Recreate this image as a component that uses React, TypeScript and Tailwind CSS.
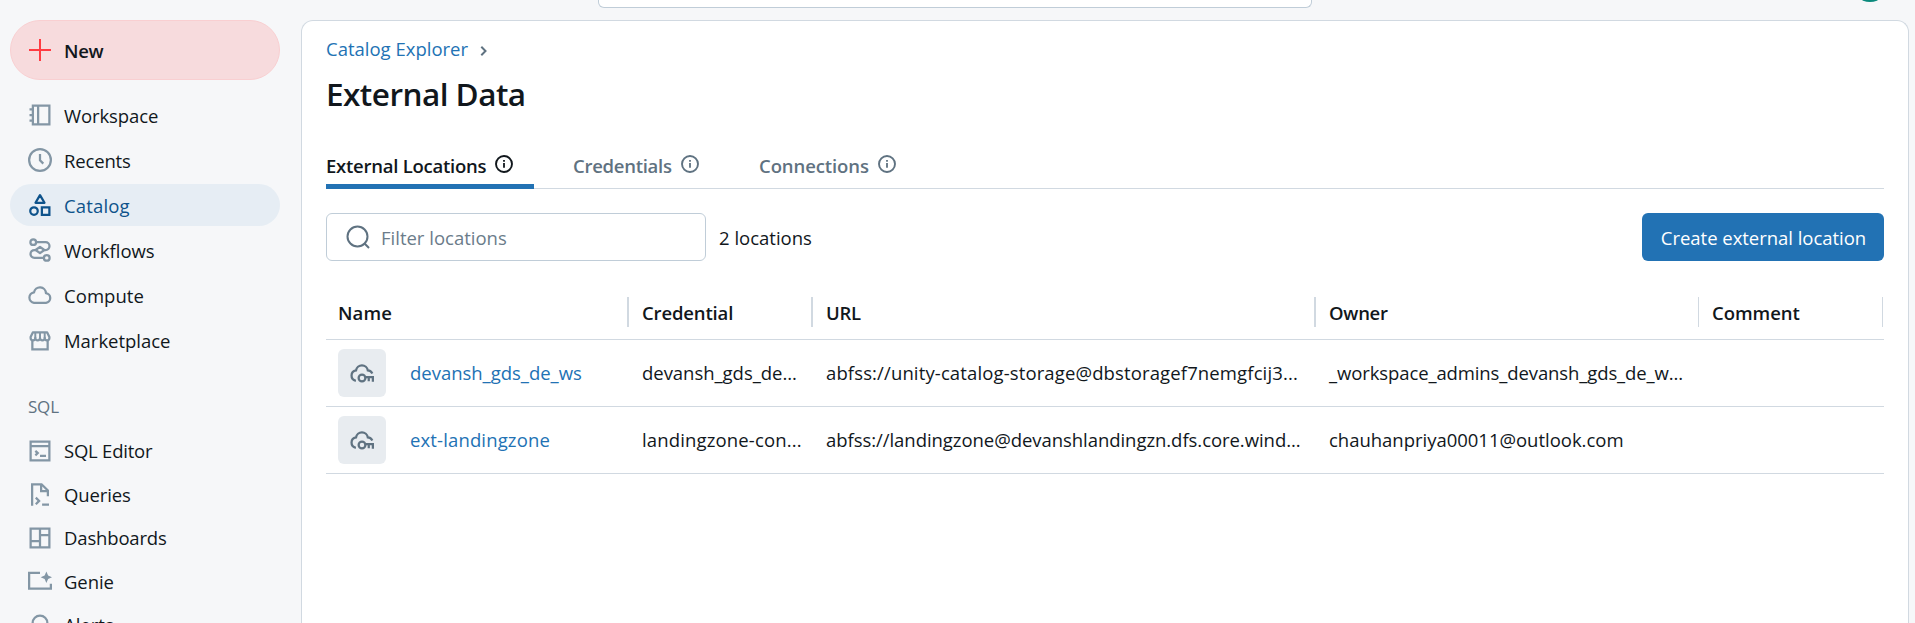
import type { ReactNode } from "react";

function Icon({ children, className = "size-6" }: { children: ReactNode; className?: string }) {
  return (
    <svg viewBox="0 0 16 16" className={`${className} shrink-0`} fill="none" stroke="currentColor" strokeWidth="1.5">
      {children}
    </svg>
  );
}

const WorkspaceIcon = () => (
  <Icon>
    <path d="M3.25 1.75h11v12.5h-11zM6.75 1.75v12.5M1 4.25h2.5M1 8h2.5M1 11.75h2.5" />
  </Icon>
);

const ClockIcon = () => (
  <Icon>
    <circle cx="8" cy="8" r="7.25" />
    <path d="M8 4v4.2l2.2 2.2" />
  </Icon>
);

const CatalogIcon = () => (
  <Icon>
    <path d="M8 1.4 11 6.5H5z" strokeLinejoin="round" />
    <circle cx="4" cy="12" r="2.5" />
    <path d="M9.25 9.5h5v5h-5z" />
  </Icon>
);

const WorkflowsIcon = () => (
  <Icon>
    <circle cx="3.5" cy="2.75" r="1.9" />
    <circle cx="12.5" cy="13.25" r="1.9" />
    <path d="M5.4 2.75h6.3a2.6 2.6 0 0 1 0 5.25H11M5 8h-.7a2.6 2.6 0 0 0 0 5.25h6.3" />
    <path d="M8 5.9 10.9 8 8 10.1 5.1 8z" strokeLinejoin="round" />
  </Icon>
);

const CloudIcon = () => (
  <Icon>
    <path d="M4 13.2a3.5 3.5 0 0 1 .03-6.95 4 4 0 0 1 7.94.5A3.25 3.25 0 0 1 12 13.2z" strokeLinejoin="round" />
  </Icon>
);

const MarketIcon = () => (
  <Icon>
    <path d="M2.9 8v6.25h10.2V8" />
    <path
      d="M3.2 2.95h9.6l1.45 3.1v.6a1.56 1.56 0 0 1-3.12 0 1.56 1.56 0 0 1-3.13 0 1.56 1.56 0 0 1-3.13 0 1.56 1.56 0 0 1-3.12 0v-.6z"
      strokeLinejoin="round"
    />
    <path d="M4.87 6.6V2.95M8 6.6V2.95M11.13 6.6V2.95" strokeWidth="1.3" />
  </Icon>
);

const SqlEditorIcon = () => (
  <Icon>
    <path d="M1.75 1.75h12.5v12.5H1.75zM1.75 4.75h12.5M8 11.25h4" />
    <path d="m4.9 7.9 1.6 1.5-1.6 1.5" />
  </Icon>
);

const QueriesIcon = () => (
  <Icon>
    <path d="M2.75 15.75V1.5h6.3l4.2 4.2v3.8M8.75 1.5V6h4.5M9.4 15h4.6" />
    <path d="m5.2 10.4 2.2 2.2-2.2 2.2" />
  </Icon>
);

const DashboardsIcon = () => (
  <Icon>
    <path d="M1.75 1.75h12.5v12.5H1.75zM8 1.75v12.5M8 6h6.25M1.75 10H8" />
  </Icon>
);

const GenieIcon = () => (
  <Icon>
    <path d="M8 2.5H.75V13h14.5V9.9" />
    <path
      d="M12.25 1.7l1.15 2.65 2.65 1.15-2.65 1.15-1.15 2.65-1.15-2.65L8.45 5.5l2.65-1.15z"
      fill="currentColor"
      stroke="none"
    />
  </Icon>
);

const BellIcon = () => (
  <Icon>
    <path d="M8 1.75a4.9 4.9 0 0 0-4.9 4.9v3l-1.4 2.6h12.6l-1.4-2.6v-3A4.9 4.9 0 0 0 8 1.75zM5.5 12.5a2.5 2.5 0 0 0 5 0" />
  </Icon>
);

const CloudKeyIcon = () => (
  <Icon>
    <path d="M3.9 13.2a3.5 3.5 0 0 1 .1-6.9 4 4 0 0 1 7.9 0c1.5.1 2.5 1 3 2" />
    <circle cx="8" cy="11.3" r="2.25" />
    <path d="M10.2 10.8h5.05v3M12.5 10.8v2.7" />
  </Icon>
);

const InfoIcon = () => (
  <Icon className="-mt-1 size-[18px]">
    <circle cx="8" cy="8" r="7.1" strokeWidth="1.7" />
    <path d="M8 7.2v4.2M8 4.5v1.6" strokeWidth="1.6" />
  </Icon>
);

function NavItem({
  icon,
  label,
  active,
  className,
}: {
  icon: ReactNode;
  label: string;
  active?: boolean;
  className: string;
}) {
  return (
    <a
      className={`flex shrink-0 items-center gap-3 rounded-full pl-[18px] ${
        active ? "bg-[#e6edf4] text-[#0e538b]" : "text-[#8396a5]"
      } ${className}`}
    >
      {icon}
      <span className={`pt-px leading-6 ${active ? "" : "text-[#11171c]"}`}>{label}</span>
    </a>
  );
}

function Sidebar() {
  return (
    <nav className="flex w-[301px] shrink-0 flex-col pt-5 pl-2.5">
      <button className="flex h-[60px] w-[270px] shrink-0 items-center gap-3 rounded-full border border-[#f9cfd1] bg-[#f7dbdd] pl-[17px] font-semibold text-[#11171c]">
        <svg viewBox="0 0 24 24" className="size-6 text-[#ff3b42]" fill="none" stroke="currentColor" strokeWidth="2">
          <path d="M12 1v22M1 12h22" />
        </svg>
        <span className="pt-0.5 tracking-[-0.3px]">New</span>
      </button>
      <div className="mt-[14px] flex w-[270px] flex-col gap-[3px]">
        <NavItem icon={<WorkspaceIcon />} label="Workspace" className="h-[42px] tracking-[-0.1px]" />
        <NavItem icon={<ClockIcon />} label="Recents" className="h-[42px] tracking-[-0.17px]" />
        <NavItem icon={<CatalogIcon />} label="Catalog" active className="h-[42px] tracking-[0.15px]" />
        <NavItem icon={<WorkflowsIcon />} label="Workflows" className="h-[42px]" />
        <NavItem icon={<CloudIcon />} label="Compute" className="h-[42px] tracking-[0.06px]" />
        <NavItem icon={<MarketIcon />} label="Marketplace" className="h-[42px] tracking-[-0.03px]" />
      </div>
      <h2 className="mt-[34px] pl-[18px] text-[17px] leading-6 tracking-[-0.2px] text-[#5f7281]">SQL</h2>
      <div className="mt-[10px] flex w-[270px] flex-col">
        <NavItem icon={<SqlEditorIcon />} label="SQL Editor" className="h-[43.5px] tracking-[-0.22px]" />
        <NavItem icon={<QueriesIcon />} label="Queries" className="h-[43.5px] tracking-[-0.12px]" />
        <NavItem icon={<DashboardsIcon />} label="Dashboards" className="h-[43.5px] tracking-[-0.16px]" />
        <NavItem icon={<GenieIcon />} label="Genie" className="h-[43.5px] tracking-[-0.09px]" />
        <NavItem icon={<BellIcon />} label="Alerts" className="h-[43.5px]" />
      </div>
    </nav>
  );
}

const columns = [
  { label: "Name", className: "tracking-[0.1px]", divider: "w-0.5 mr-px" },
  { label: "Credential", className: "tracking-[-0.15px]", divider: "w-0.5 mr-px" },
  { label: "URL", className: "tracking-[-0.28px]", divider: "w-0.5 mr-px" },
  { label: "Owner", className: "tracking-[-0.26px]", divider: "w-px mr-px" },
  { label: "Comment", className: "tracking-[-0.04px]", divider: "w-px mr-px" },
];

const rows = [
  {
    name: ["devansh_gds_de_ws", "tracking-[-0.02px]"],
    cells: [
      ["devansh_gds_de...", "tracking-[-0.03px]"],
      ["abfss://unity-catalog-storage@dbstoragef7nemgfcij3...", "tracking-[0.13px]"],
      ["_workspace_admins_devansh_gds_de_w...", "tracking-[-0.11px]"],
      ["", ""],
    ],
  },
  {
    name: ["ext-landingzone", "tracking-[0.14px]"],
    cells: [
      ["landingzone-con...", "tracking-[0.15px]"],
      ["abfss://landingzone@devanshlandingzn.dfs.core.wind...", "tracking-[-0.05px]"],
      ["chauhanpriya00011@outlook.com", "tracking-[-0.02px]"],
      ["", ""],
    ],
  },
];

function LocationsTable() {
  return (
    <div className="mt-[26px]">
      <div className="grid h-[53px] grid-cols-[304px_184px_503px_383px_184px] border-b border-[#d1d9e1]">
        {columns.map((c) => (
          <div key={c.label} className="flex h-[50px] items-center justify-between pl-3">
            <span className={`pt-px font-semibold ${c.className}`}>{c.label}</span>
            <span className={`h-[30px] bg-[#d1d9e1] ${c.divider}`} />
          </div>
        ))}
      </div>
      {rows.map((r) => (
        <div
          key={r.name[0]}
          className="grid h-[67px] grid-cols-[304px_184px_503px_383px_184px] items-center border-b border-[#d1d9e1] whitespace-nowrap"
        >
          <div className="flex items-center gap-6 pl-3">
            <span className="grid size-12 place-items-center rounded-md bg-[#e8ecf0] text-[#5f7281]">
              <CloudKeyIcon />
            </span>
            <a className={`text-[#2272b4] ${r.name[1]}`}>{r.name[0]}</a>
          </div>
          {r.cells.map(([text, tracking], i) => (
            <span key={i} className={`pl-3 ${tracking}`}>
              {text}
            </span>
          ))}
        </div>
      ))}
    </div>
  );
}

export default function App() {
  return (
    <div className="flex h-[623px] w-full overflow-hidden bg-[#f6f7f9] font-['Open_Sans','Liberation_Sans',sans-serif] text-[18.5px] leading-6 text-[#11171c]">
      <Sidebar />
      <div className="flex min-w-0 flex-1 flex-col">
        <header className="flex h-5 shrink-0 items-start">
          <div className="ml-[297px] h-2 w-[714px] rounded-b-md border border-t-0 border-[#c0cdd8] bg-white" />
          <div className="-mt-[34px] mr-[27px] ml-auto size-9 shrink-0 rounded-full bg-[#0b8a7d]" />
        </header>
        <main className="mr-[6px] flex flex-1 flex-col rounded-t-xl border border-b-0 border-[#d1d9e1] bg-white pr-6 pl-6">
          <div className="mt-4 flex items-center gap-3 text-[#2272b4]">
            <span>Catalog Explorer</span>
            <svg viewBox="0 0 8 12" className="mt-1 h-3 w-2 text-[#5f7281]" fill="none" stroke="currentColor" strokeWidth="2">
              <path d="m1.3 1.8 4.2 4.2-4.2 4.2" />
            </svg>
          </div>
          <h1 className="mt-3 text-[31.5px] leading-[42px] font-semibold tracking-[-0.53px]">External Data</h1>
          <div className="mt-[39px] flex h-[35px] gap-[39px] border-b border-[#d1d9e1] font-semibold text-[#5f7281]">
            <div className="-mb-px flex h-[35px] w-[208px] items-center gap-[9px] border-b-[5px] border-[#2272b4] pb-1.5 text-[#11171c]">
              <span className="tracking-[-0.25px]">External Locations</span>
              <InfoIcon />
            </div>
            <div className="flex h-6 w-[147px] items-center gap-[9px]">
              <span className="tracking-[-0.27px]">Credentials</span>
              <InfoIcon />
            </div>
            <div className="flex h-6 items-center gap-[9px]">
              <span className="tracking-[-0.09px]">Connections</span>
              <InfoIcon />
            </div>
          </div>
          <div className="mt-6 flex h-12 items-center">
            <div className="flex h-12 w-[380px] items-center gap-[11px] rounded-md border border-[#c0cdd8] pl-[19px] text-[#5f7281]">
              <svg viewBox="0 0 24 24" className="size-6" fill="none" stroke="currentColor" strokeWidth="2">
                <circle cx="11.5" cy="11.5" r="10" />
                <path d="m18.3 18.3 4.7 4.7" />
              </svg>
              <span className="pt-px text-[#6b7c8a]">Filter locations</span>
            </div>
            <span className="ml-[13px] pt-px">2 locations</span>
            <button className="ml-auto h-12 w-[242px] rounded-md bg-[#2272b4] pt-px pl-px tracking-[-0.03px] text-white">
              Create external location
            </button>
          </div>
          <LocationsTable />
        </main>
      </div>
    </div>
  );
}
